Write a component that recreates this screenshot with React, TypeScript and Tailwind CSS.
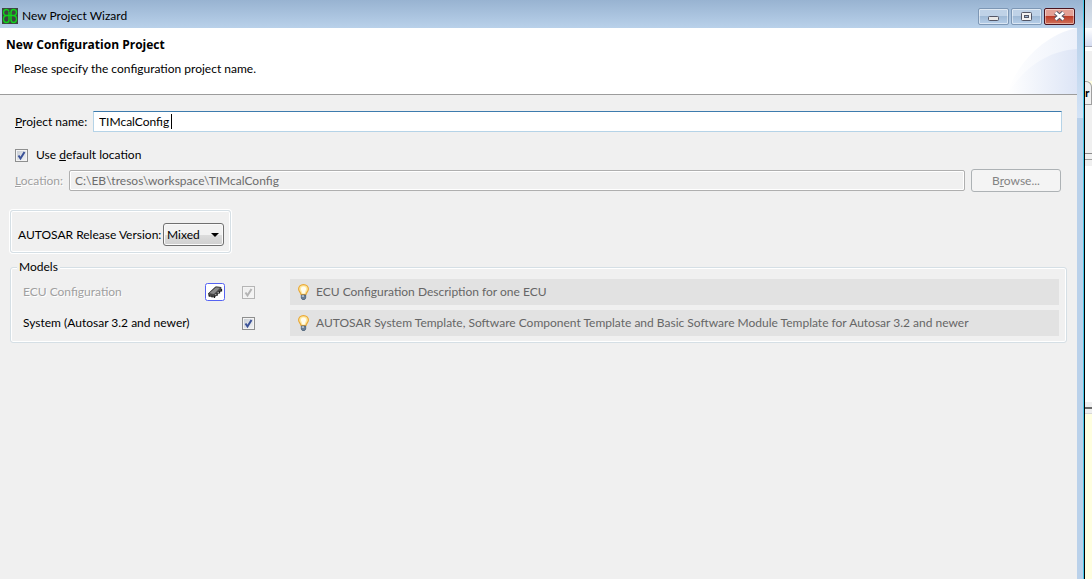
import { useState, type ReactNode } from "react";

function AppIcon() {
  return (
    <svg width="16" height="16" viewBox="0 0 16 16" aria-hidden="true">
      <rect width="16" height="16" fill="#3d4440" />
      <path
        d="M7 3.500C6.500 1.500 5.500 1.500 4.500 1.500C2.500 1.500 1.500 3 1.500 4.500C1.500 6.500 3 7.500 5 7.500H11C13 7.500 14.500 6.500 14.500 4.500C14.500 2.500 13 1.500 11.500 1.500C9.500 1.500 9 3 9 4.500V11.500C9 13.500 10 14.500 11.500 14.500C13.500 14.500 14.500 13 14.500 11C14.500 9 13 7.500 11 7.500M5 7.500C3 7.500 1.500 9 1.500 11C1.500 13 2.500 14.500 4.500 14.500C6.500 14.500 7 13.500 7 12V4"
        fill="none"
        stroke="#10d41c"
        strokeWidth="1.400"
      />
    </svg>
  );
}

function BulbIcon() {
  return (
    <svg width="16" height="16" viewBox="0 0 16 16" className="shrink-0" aria-hidden="true">
      <path d="M8.500 .6C5.500 .6 3.600 2.700 3.600 5.100C3.600 7.300 5.500 8.200 6 10.500H11C11.500 8.200 13.400 7.300 13.400 5.100C13.400 2.700 11.500 .6 8.500 .6Z" fill="#ffe9a0" stroke="#e9a93a" strokeWidth="1.200" />
      <path d="M8.500 2.500C6.500 2.500 5.500 4 6 5.500L7.500 9.500H9.500L11 5.500C11.500 4 10.500 2.500 8.500 2.500Z" fill="#fffdf0" />
      <path d="M6.300 11H10.700V14L9.700 15.500H7.300L6.300 14Z" fill="#6b8097" stroke="#465d75" strokeWidth=".8" />
      <path d="M6.800 12H9" stroke="#f1f5f8" />
    </svg>
  );
}

function ChipIcon() {
  return (
    <svg width="20" height="18" viewBox="0 0 20 18" role="img" aria-label="ECU">
      <rect x=".5" y=".5" width="19" height="17" rx="2" fill="#fff" stroke="#5563f2" />
      <path d="M3 10.500L10.500 3.500L16 4L17 7.500L9.500 14.500L3.500 13.500Z" fill="#4a4a4a" />
      <path d="M3.500 10.500L11 4L16 4.500L9 11.500Z" fill="#8a8a8a" stroke="#3c3c3c" strokeWidth=".8" />
      <path d="M9.500 15V12.500M12 13V10.500M14.500 10.500V8M16.500 8.500V6" stroke="#1c1c1c" strokeWidth="1.200" />
      <path d="M10.800 12V11M13.200 10V9" stroke="#c4c4c4" />
      <path d="M4.500 13.500V12M7 14.500V12.500" stroke="#222" />
    </svg>
  );
}

interface CheckProps {
  id: string;
  label?: string;
  checked: boolean;
  disabled?: boolean;
  onChange?: (value: boolean) => void;
}

function Check({ id, label, checked, disabled, onChange }: CheckProps) {
  return (
    <span className="relative grid size-[13px] shrink-0">
      <input
        id={id}
        type="checkbox"
        aria-label={label}
        checked={checked}
        disabled={disabled}
        onChange={(e) => onChange?.(e.target.checked)}
        className="peer size-[13px] appearance-none border border-[#8e8f8f] bg-linear-to-br from-[#c5cbd3] to-[#f5f6f7] shadow-[inset_0_0_0_1px_#f4f4f4] disabled:border-[#b5b5b5] disabled:from-[#eeeeee] disabled:to-[#f5f5f5]"
      />
      <svg
        viewBox="0 0 13 13"
        className="pointer-events-none absolute inset-0 hidden size-[13px] text-[#3b5298] peer-checked:block peer-disabled:text-[#b4b4b4]"
        aria-hidden="true"
      >
        <path d="M3.500 6.500L5.500 9.500L9.500 3" fill="none" stroke="currentColor" strokeWidth="2" />
      </svg>
    </span>
  );
}

function CaptionButton({ label, danger, children }: { label: string; danger?: boolean; children: ReactNode }) {
  return (
    <button
      type="button"
      aria-label={label}
      className={
        danger
          ? "grid h-[17px] w-[31px] place-items-center rounded-[2px] border border-[#4a1420] bg-linear-to-b from-[#e3a095] from-45% via-[#bd3c28] via-50% to-[#d0705a] shadow-[inset_0_0_0_1px_#ffffff70]"
          : "grid h-[17px] w-[31px] place-items-center rounded-[2px] border border-[#7d97b5] bg-linear-to-b from-[#bfd2e7] from-45% via-[#a0bad6] via-50% to-[#b7cfe9] shadow-[inset_0_0_0_1px_#ffffff80]"
      }
    >
      {children}
    </button>
  );
}

function Description({ children }: { children: ReactNode }) {
  return (
    <div className="flex h-[26px] min-w-0 items-center gap-[5px] bg-[#e2e2e2] pl-[5px] text-[#666666]">
      <BulbIcon />
      <span className="whitespace-nowrap">{children}</span>
    </div>
  );
}

function WindowBehind() {
  return (
    <div className="flex w-[7px] shrink-0 flex-col overflow-hidden bg-[#ffffe1]" aria-hidden="true">
      <div className="h-7 bg-linear-to-b from-[#c3cfdd] to-[#dce5ef]" />
      <div className="h-[19px] border-b border-[#a5a9b8] bg-linear-to-b from-white to-[#d5dcf0]" />
      <div className="h-[34px] border-t-4 border-white bg-[#f0f0f0]" />
      <div className="flex h-6 items-center rounded-tr-[6px] border-y border-r border-[#a0a0a0] bg-[#f0f0f0] font-bold">r</div>
      <div className="h-[49px] border-b border-[#8c8c8c] bg-[#f0f0f0]" />
      <div className="h-[6px] border-b border-[#a0a0a0] bg-[#f0f0f0]" />
      <div className="h-[6px] bg-[#f0f0f0]" />
      <div className="h-[236px] bg-white" />
      <div className="h-[7px] border-b-2 border-[#6a6a6a] bg-[#f0f0f0]" />
      <div className="h-[5px] border-b border-[#d8d8d8] bg-[#f0f0f0]" />
    </div>
  );
}

export default function App() {
  const [name, setName] = useState("TIMcalConfig");
  const [useDefault, setUseDefault] = useState(true);
  const [system, setSystem] = useState(true);

  return (
    <div className="flex min-h-screen bg-[#bad1ea] font-['Lato',sans-serif] text-[12px] leading-4 text-black">
      <section className="flex min-w-0 flex-1 flex-col" aria-label="New Project Wizard">
        <header className="flex h-7 items-center gap-1 bg-linear-to-b from-[#98b3d1] to-[#b9d1ea] pt-1 pl-0.5">
          <AppIcon />
          <h1 className="flex-1">New Project Wizard</h1>
          <div className="mr-[2px] flex gap-[2px]">
            <CaptionButton label="Minimize">
              <svg width="11" height="9" viewBox="0 0 11 9" aria-hidden="true">
                <rect x=".5" y="4.500" width="10" height="4" rx="1" fill="#e8e8e8" stroke="#535666" />
              </svg>
            </CaptionButton>
            <CaptionButton label="Maximize">
              <svg width="11" height="9" viewBox="0 0 11 9" aria-hidden="true">
                <rect x=".5" y=".5" width="10" height="8" rx="1" fill="#f2f2f2" stroke="#535666" />
                <rect x="3.500" y="3.500" width="4" height="2" fill="#9bb5d3" stroke="#535666" />
              </svg>
            </CaptionButton>
            <CaptionButton label="Close" danger>
              <svg width="13" height="10" viewBox="0 0 13 10" aria-hidden="true">
                <path d="M2.500 1.500L10.500 8.500M10.500 1.500L2.500 8.500" stroke="#535666" strokeWidth="4.400" />
                <path d="M2.500 1.500L10.500 8.500M10.500 1.500L2.500 8.500" stroke="#fff" strokeWidth="2.400" />
              </svg>
            </CaptionButton>
          </div>
        </header>

        <main className="flex flex-1 flex-col bg-[#f0f0f0]">
          <div className="flex h-[67px] justify-between border-b border-[#9c9c9c] bg-white">
            <div className="flex flex-col gap-2 pt-[9px] pl-[6px]">
              <h2 className="font-['Open_Sans',sans-serif] font-bold">New Configuration Project</h2>
              <p className="pl-2">Please specify the configuration project name.</p>
            </div>
            <svg width="75" height="66" viewBox="0 0 75 66" aria-hidden="true">
              <defs>
                <linearGradient id="swoosh" x1="0" x2="1">
                  <stop offset="0" stopColor="#fff" />
                  <stop offset="1" stopColor="#dde5f6" />
                </linearGradient>
              </defs>
              <path d="M5 66C14 36 43 6 75 0V66Z" fill="url(#swoosh)" opacity=".55" />
              <path d="M5 66C22 40 45 23 75 21V66Z" fill="url(#swoosh)" />
            </svg>
          </div>

          <form className="flex flex-col px-[10px] pt-4" onSubmit={(e) => e.preventDefault()}>
            <div className="flex items-center pr-[5px] pl-[5px]">
              <label htmlFor="project" className="w-[78px] shrink-0 whitespace-nowrap">
                <u>P</u>roject name:
              </label>
              <div className="relative flex min-w-0 flex-1 items-center">
                <input
                  id="project"
                  value={name}
                  onChange={(e) => setName(e.target.value)}
                  className="peer h-[21px] min-w-0 flex-1 border border-[#b5d3e7] border-t-[#3d7bad] bg-white px-[5px] outline-none"
                />
                <span className="absolute left-[78px] h-[15px] w-px bg-black peer-focus:hidden" aria-hidden="true" />
              </div>
            </div>

            <div className="mt-[15px] flex items-center gap-2 pl-[5px]">
              <Check id="default" checked={useDefault} onChange={setUseDefault} />
              <label htmlFor="default">
                Use <u>d</u>efault location
              </label>
            </div>

            <div className="mt-[6px] flex items-center pr-[6px] pl-[5px]">
              <label htmlFor="location" className="w-[54px] shrink-0 whitespace-nowrap text-[#a0a0a0] [text-shadow:1px_1px_#fff]">
                <u>L</u>ocation:
              </label>
              <input
                id="location"
                disabled={useDefault}
                defaultValue={"C:\\EB\\tresos\\workspace\\TIMcalConfig"}
                className="mr-[6px] h-[21px] min-w-0 flex-1 rounded-[2px] border border-[#afafaf] bg-[#f0f0f0] px-[5px] text-[#6d6d6d] shadow-[inset_0_0_0_1px_#fff]"
              />
              <button type="button" disabled={useDefault} className="h-[23px] w-[90px] rounded-[3px] border border-[#adb2b5] bg-[#f4f4f4] text-[#838383]">
                B<u>r</u>owse...
              </button>
            </div>

            <div className="mt-[18px] flex h-[43px] items-center self-start rounded-[3px] border border-[#d5dfe5] pt-[6px] pr-[6px] pl-[7px] shadow-[inset_0_0_0_1px_#fff,0_0_0_1px_#fff]">
              <label htmlFor="release" className="w-[145px] whitespace-nowrap">
                AUTOSAR Release Version:
              </label>
              <div className="relative flex items-center">
                <select
                  id="release"
                  className="h-[23px] w-[61px] appearance-none rounded-[3px] border border-[#707070] bg-linear-to-b from-[#f2f2f2] from-50% via-[#dddddd] via-50% to-[#cfcfcf] pl-[3px] shadow-[inset_0_0_0_1px_#fafafa]"
                >
                  <option>Mixed</option>
                </select>
                <svg width="8" height="4" viewBox="0 0 8 4" className="pointer-events-none absolute right-[5px]" aria-hidden="true">
                  <path d="M0 0H8L4 4Z" />
                </svg>
              </div>
            </div>

            <fieldset className="mt-[6px] rounded-[3px] border border-[#d5dfe5] px-[7px] pb-[6px] shadow-[inset_0_0_0_1px_#fff]">
              <legend className="-ml-px bg-[#f0f0f0] px-[2px]">Models</legend>
              <div className="grid grid-cols-[182px_37px_48px_minmax(0,1fr)] items-center gap-y-[5px] pt-1 pl-[5px]">
                <label htmlFor="ecu" className="text-[#a0a0a0] [text-shadow:1px_1px_#fff]">
                  ECU Configuration
                </label>
                <ChipIcon />
                <Check id="ecu" checked disabled />
                <Description>ECU Configuration Description for one ECU</Description>
                <label htmlFor="system" className="col-span-2">
                  System (Autosar 3.2 and newer)
                </label>
                <Check id="system" checked={system} onChange={setSystem} />
                <Description>
                  AUTOSAR System Template, Software Component Template and Basic Software Module Template for Autosar 3.2 and newer
                </Description>
              </div>
            </fieldset>
          </form>
        </main>
      </section>
      <div className="flex w-2 shrink-0 flex-col border-r border-black">
        <div className="h-[118px] border-r border-[#45c8e8] bg-linear-to-b from-[#98b3d1] via-[#b9d1ea] via-25% to-[#d3e3f6]" />
        <div className="flex-1 border-r border-[#45c8e8]" />
      </div>
      <WindowBehind />
    </div>
  );
}
